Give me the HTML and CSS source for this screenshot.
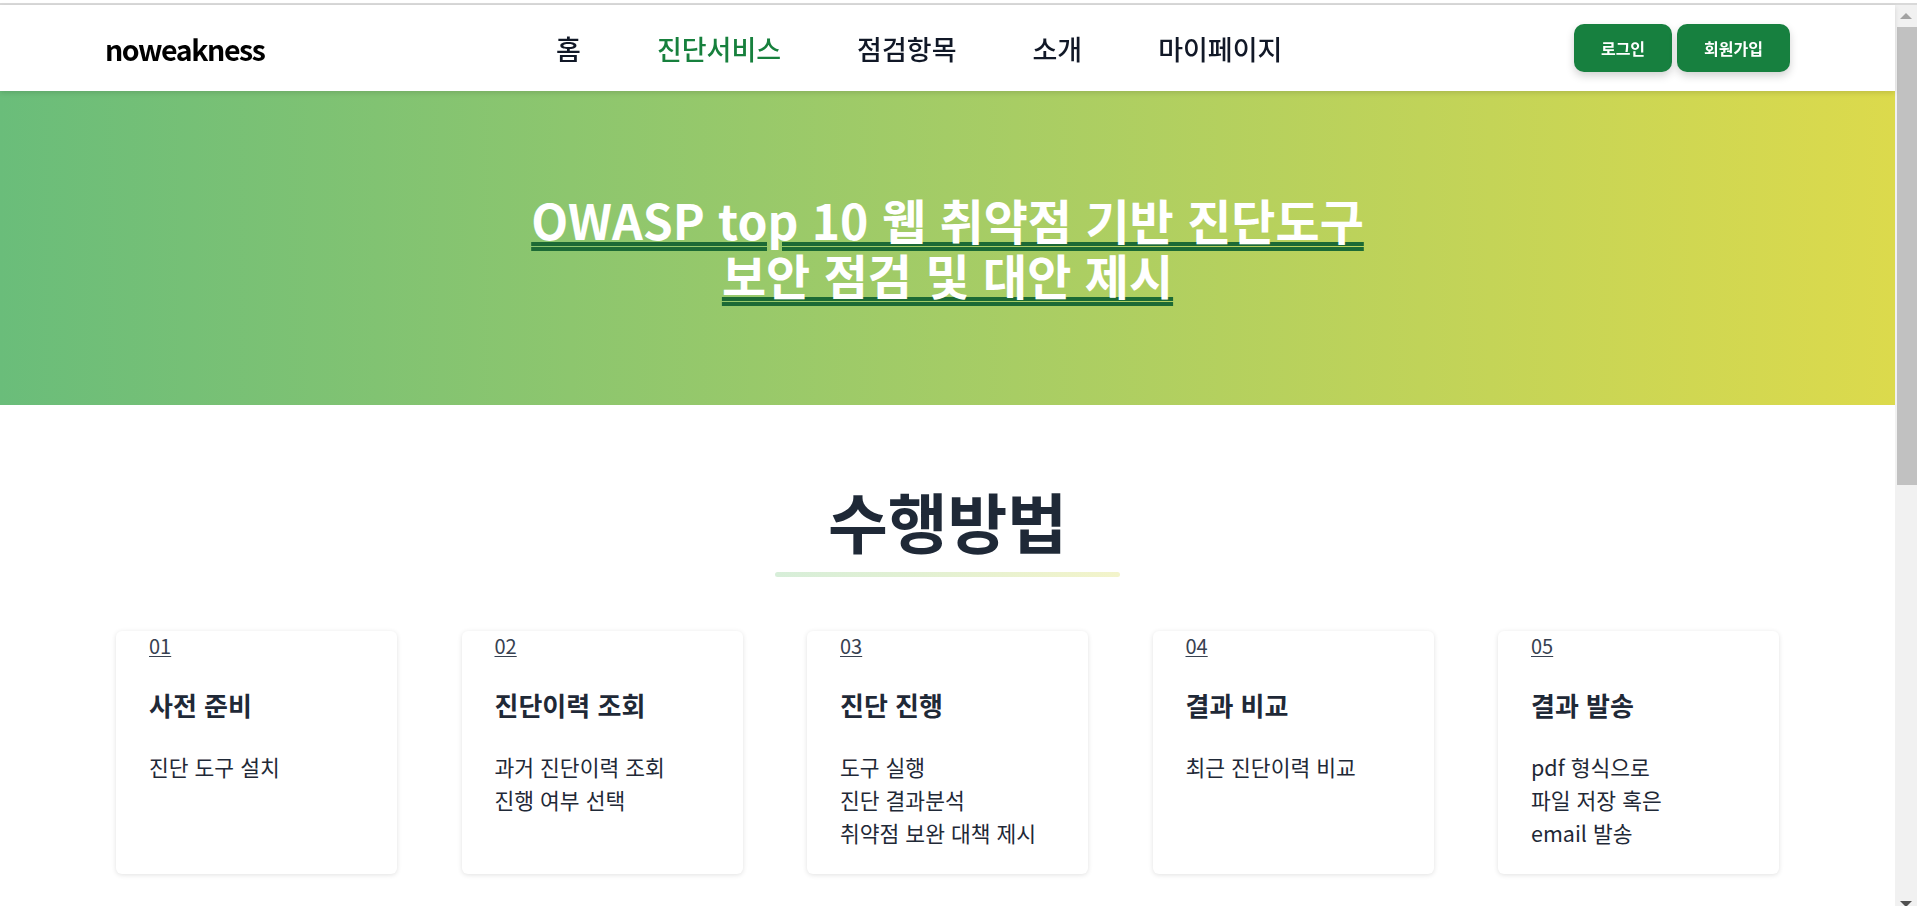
FILE: index.html
```html
<!DOCTYPE html>
<html lang="ko">
<head>
<meta charset="utf-8">
<title>noweakness</title>
<link rel="stylesheet" href="styles.css">
</head>
<body>
<div class="topline"></div>
<div class="page">
  <header class="site-header">
    <a class="logo" href="#">noweakness</a>
    <nav class="main-nav">
      <a href="#">홈</a>
      <a href="#" class="active">진단서비스</a>
      <a href="#">점검항목</a>
      <a href="#">소개</a>
      <a href="#">마이페이지</a>
    </nav>
    <div class="auth">
      <a class="btn" href="#">로그인</a>
      <a class="btn" href="#">회원가입</a>
    </div>
  </header>

  <section class="hero">
    <h1>OWASP top 10 웹 취약점 기반 진단도구<br>보안 점검 및 대안 제시</h1>
  </section>

  <section class="method">
    <h2>수행방법</h2>
    <div class="bar"></div>
    <div class="steps">
      <article class="card">
        <a class="num" href="#">01</a>
        <h3>사전 준비</h3>
        <p>진단 도구 설치</p>
      </article>
      <article class="card">
        <a class="num" href="#">02</a>
        <h3>진단이력 조회</h3>
        <p>과거 진단이력 조회<br>진행 여부 선택</p>
      </article>
      <article class="card">
        <a class="num" href="#">03</a>
        <h3>진단 진행</h3>
        <p>도구 실행<br>진단 결과분석<br>취약점 보완 대책 제시</p>
      </article>
      <article class="card">
        <a class="num" href="#">04</a>
        <h3>결과 비교</h3>
        <p>최근 진단이력 비교</p>
      </article>
      <article class="card">
        <a class="num" href="#">05</a>
        <h3>결과 발송</h3>
        <p>pdf 형식으로<br>파일 저장 혹은<br>email 발송</p>
      </article>
    </div>
  </section>
</div>

<div class="scrollbar">
  <div class="sb-up"></div>
  <div class="sb-thumb"></div>
  <div class="sb-down"></div>
</div>
</body>
</html>
```

FILE: styles.css
```css
html {
  scrollbar-width: none;
}
html::-webkit-scrollbar { display: none; }

body {
  margin: 0;
  font-family: "Noto Sans CJK KR", "Noto Sans", sans-serif;
  color: #1f2937;
  background: #fff;
}

a { text-decoration: none; color: inherit; }

.topline {
  height: 3px;
  border-bottom: 2px solid #d9d9d9;
  background: #fff;
}

.page {
  width: 1895px;
}

/* header */
.site-header {
  position: relative;
  z-index: 2;
  height: 86px;
  padding: 0 105px 0 105px;
  display: flex;
  align-items: center;
  justify-content: space-between;
  background: #fff;
  box-shadow: 0 2px 5px rgba(0, 0, 0, 0.12);
}

.logo {
  font-size: 28.5px;
  font-weight: 700;
  color: #000;
  letter-spacing: -1.4px;
}

.main-nav {
  display: flex;
  gap: 76px;
  font-size: 27px;
  font-weight: 500;
  color: #111827;
}

.main-nav .active {
  color: #17803d;
}

.auth {
  display: flex;
  gap: 5px;
}

.btn {
  height: 48px;
  padding: 0 27px;
  display: flex;
  align-items: center;
  background: #17803f;
  color: #fff;
  font-size: 16px;
  font-weight: 700;
  border-radius: 10px;
  box-shadow: 0 4px 8px rgba(0, 0, 0, 0.18);
}

/* hero */
.hero {
  height: 314px;
  box-sizing: border-box;
  padding-bottom: 3px;
  display: flex;
  align-items: center;
  justify-content: center;
  background: linear-gradient(90deg, #6abd7a 0%, #a4cc66 50%, #dcda4c 100%);
}

.hero h1 {
  margin: 0;
  font-size: 48px;
  font-weight: 700;
  line-height: 55px;
  color: #fff;
  text-align: center;
  text-decoration-line: underline;
  text-decoration-style: double;
  text-decoration-color: #1c6a35;
  text-decoration-thickness: 3.5px;
  text-underline-offset: 2px;
}

/* method */
.method {
  padding-top: 79px;
  padding-bottom: 40px;
}

.method h2 {
  margin: 0;
  text-align: center;
  font-size: 65px;
  font-weight: 700;
  line-height: 72px;
  color: #1f2937;
}

.bar {
  width: 345px;
  height: 5px;
  margin: 16px auto 0;
  border-radius: 3px;
  background: linear-gradient(90deg, #d7eed9, #f3f4cb);
}

.steps {
  margin-top: 54px;
  display: flex;
  justify-content: center;
  gap: 64.5px;
}

.card {
  width: 281px;
  box-sizing: border-box;
  min-height: 243px;
  padding: 5px 33px 25px;
  background: #fff;
  border-radius: 6px;
  box-shadow: 0 1px 5px rgba(0, 0, 0, 0.12);
}

.num {
  display: block;
  width: max-content;
  font-size: 20px;
  line-height: 20px;
  color: #374151;
  text-decoration: underline;
  text-decoration-thickness: 1px;
  text-underline-offset: 2px;
}

.card h3 {
  margin: 33.5px 0 0;
  font-size: 26px;
  line-height: 29px;
  font-weight: 700;
  color: #1f2937;
}

.card p {
  margin: 31px 0 0;
  font-size: 21.5px;
  line-height: 33.3px;
  color: #1f2937;
}

/* fake window scrollbar */
.scrollbar {
  position: fixed;
  top: 5px;
  right: 0;
  bottom: 0;
  width: 22px;
  background: #f1f1f1;
}

.sb-up {
  height: 22px;
  display: flex;
  align-items: center;
  justify-content: center;
}
.sb-up::before {
  content: "";
  border-left: 6px solid transparent;
  border-right: 6px solid transparent;
  border-bottom: 6px solid #a3a3a3;
}

.sb-thumb {
  margin-left: 2px;
  height: 458px;
  background: #c1c1c1;
}

.sb-down {
  position: absolute;
  left: 0;
  right: 0;
  bottom: 0;
  height: 4px;
  display: flex;
  justify-content: center;
  align-items: flex-start;
}
.sb-down::before {
  content: "";
  border-left: 6px solid transparent;
  border-right: 6px solid transparent;
  border-top: 6px solid #505050;
  margin-top: -1px;
}
```
